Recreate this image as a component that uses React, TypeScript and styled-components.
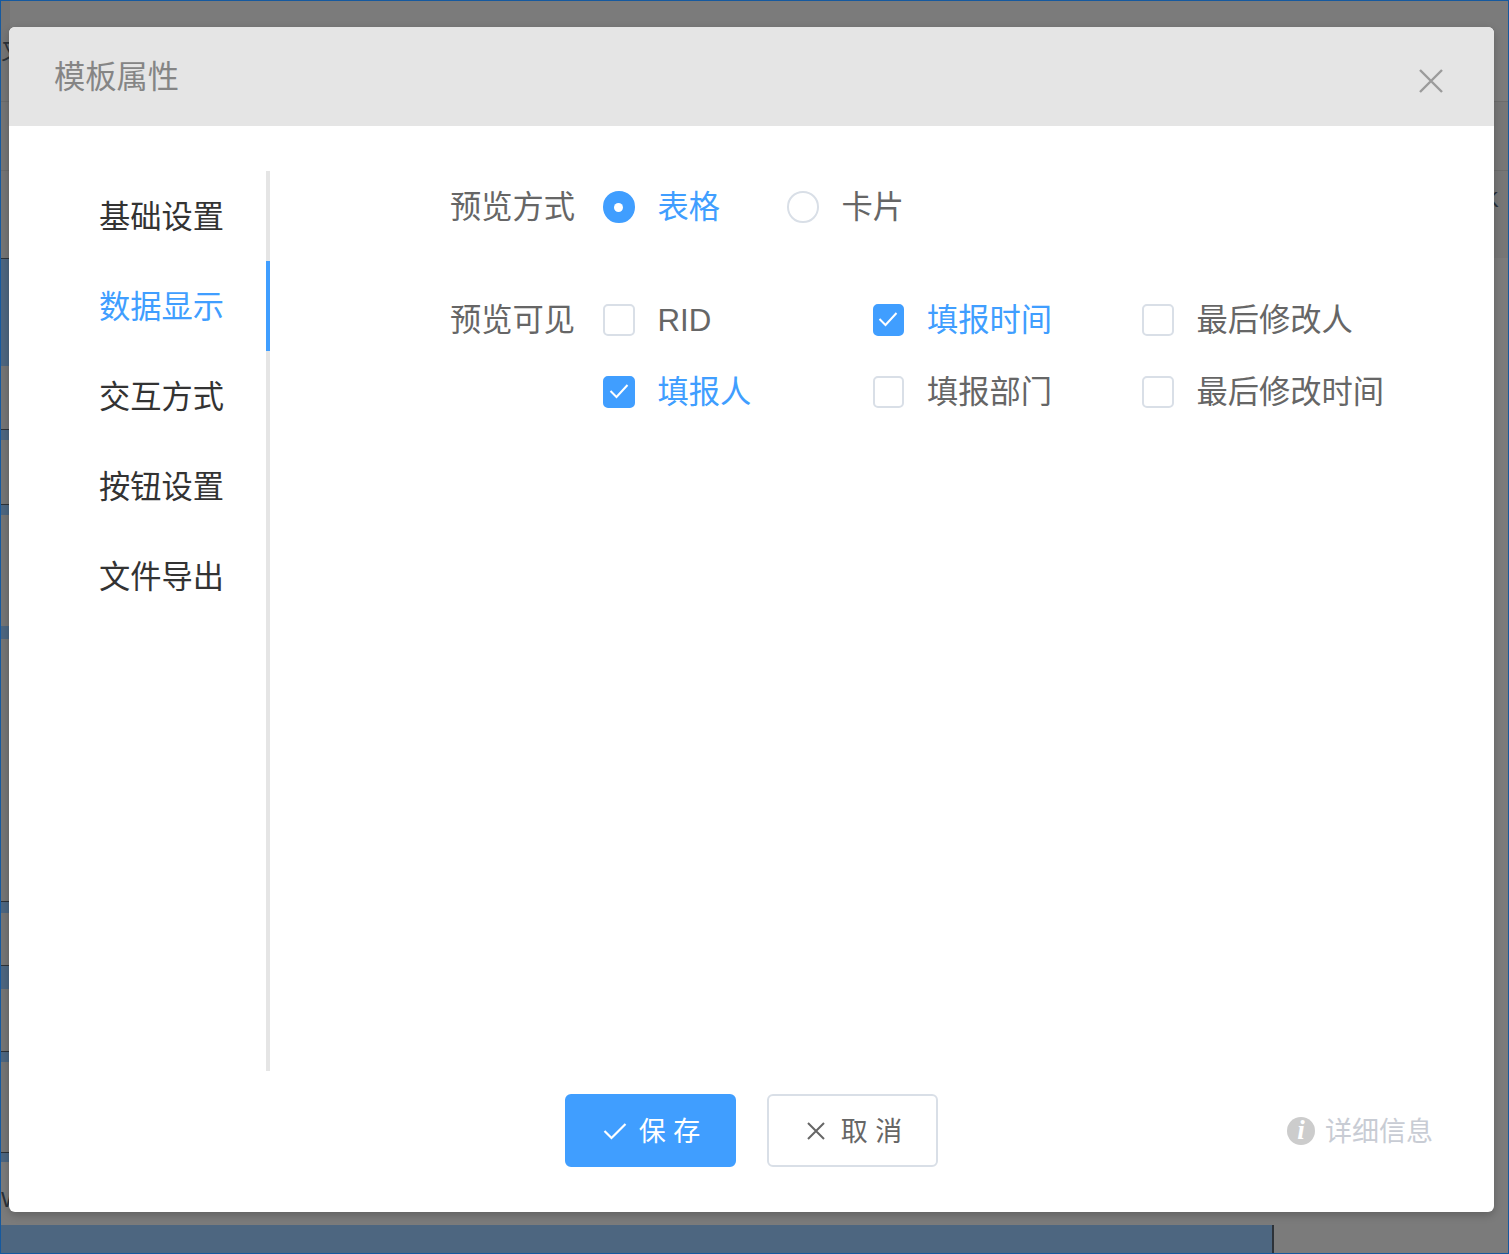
import React from 'react';
import styled, { createGlobalStyle } from 'styled-components';

const GlobalStyle = createGlobalStyle`
  html, body {
    margin: 0;
    padding: 0;
    background: #7b7b7b;
    font-family: 'Liberation Sans', 'Noto Sans CJK SC', sans-serif;
    line-height: 1.5;
  }
`;

// strips of the page behind the mask, only the gutters show them
const backdropRows = [
  { height: 100, tone: 'plain' },
  { height: 69, tone: 'lined' },
  { height: 88, tone: 'lined' },
  { height: 108, tone: 'blue' },
  { height: 63, tone: 'plain' },
  { height: 11, tone: 'blue' },
  { height: 64, tone: 'plain' },
  { height: 11, tone: 'blue' },
  { height: 111, tone: 'plain' },
  { height: 13, tone: 'blueFlat' },
  { height: 262, tone: 'plain' },
  { height: 12, tone: 'blue' },
  { height: 52, tone: 'plain' },
  { height: 24, tone: 'blue' },
  { height: 62, tone: 'plain' },
  { height: 11, tone: 'blue' },
  { height: 90, tone: 'plain' },
  { height: 10, tone: 'blue' },
];

const menu = ['基础设置', '数据显示', '交互方式', '按钮设置', '文件导出'];

const columns = [
  { label: 'RID', checked: false },
  { label: '填报时间', checked: true },
  { label: '最后修改人', checked: false },
  { label: '填报人', checked: true },
  { label: '填报部门', checked: false },
  { label: '最后修改时间', checked: false },
];

function CheckMark() {
  return (
    <svg width="20" height="16" viewBox="0 0 20 16" fill="none">
      <polyline points="1.5,7 7.5,13 18.5,1" stroke="#fff" strokeWidth="2" />
    </svg>
  );
}

function App() {
  return (
    <>
      <GlobalStyle />
      <Frame>
        <Backdrop>
          <Rows>
            {backdropRows.map((row, i) => (
              <BackRow key={i} $height={row.height}>
                <Gutter $tone={row.tone} />
                <RightGutter $lined={row.tone === 'lined'} />
              </BackRow>
            ))}
          </Rows>
          <BottomBar>
            <BottomBlue />
          </BottomBar>
        </Backdrop>
        <ClippedGlyph $left={0} $top={38}>
          又
        </ClippedGlyph>
        <ClippedGlyph $left={0} $top={1186}>
          W
        </ClippedGlyph>
        <ClippedGlyph $left={1483} $top={186}>
          K
        </ClippedGlyph>

        <Modal>
          <Header>
            <Title>模板属性</Title>
            <CloseButton>
              <svg width="26" height="26" viewBox="0 0 26 26" fill="none">
                <path d="M2 2L24 24M24 2L2 24" stroke="#9b9b9b" strokeWidth="2.4" />
              </svg>
            </CloseButton>
          </Header>
          <Body>
            <Nav>
              {menu.map((item, i) => (
                <NavItem key={item} $active={i === 1}>
                  {item}
                </NavItem>
              ))}
            </Nav>
            <Form>
              <FormRow>
                <FieldLabel>预览方式</FieldLabel>
                <RadioGroup>
                  <Option>
                    <Radio $checked />
                    <OptionText $active>表格</OptionText>
                  </Option>
                  <Option>
                    <Radio />
                    <OptionText>卡片</OptionText>
                  </Option>
                </RadioGroup>
              </FormRow>
              <FormRow>
                <FieldLabel>预览可见</FieldLabel>
                <CheckGrid>
                  {columns.map((col) => (
                    <Option key={col.label}>
                      <CheckBox $checked={col.checked}>
                        {col.checked && <CheckMark />}
                      </CheckBox>
                      <OptionText $active={col.checked}>{col.label}</OptionText>
                    </Option>
                  ))}
                </CheckGrid>
              </FormRow>
            </Form>
          </Body>
          <Footer>
            <span />
            <Buttons>
              <Button $primary>
                <svg width="24" height="18" viewBox="0 0 24 18" fill="none">
                  <polyline points="1.5,9 8.5,16 22.5,2" stroke="#fff" strokeWidth="2.2" />
                </svg>
                <ButtonLabel>保 存</ButtonLabel>
              </Button>
              <Button>
                <svg width="18" height="18" viewBox="0 0 18 18" fill="none">
                  <path d="M1 1L17 17M17 1L1 17" stroke="#666" strokeWidth="2" />
                </svg>
                <ButtonLabel>取 消</ButtonLabel>
              </Button>
            </Buttons>
            <Details>
              <InfoDot>i</InfoDot>
              <DetailsLabel>详细信息</DetailsLabel>
            </Details>
          </Footer>
        </Modal>
      </Frame>
    </>
  );
}

const Frame = styled.div`
  position: relative;
  box-sizing: border-box;
  width: 1509px;
  height: 1254px;
  overflow: hidden;
  border: 1px solid #15599f;
  background: #7b7b7b;
`;

const Backdrop = styled.div`
  display: flex;
  flex-direction: column;
  height: 100%;
`;

const Rows = styled.div`
  flex: 1;
  display: flex;
  flex-direction: column;
`;

const BackRow = styled.div<{ $height: number }>`
  display: flex;
  justify-content: space-between;
  height: ${(p) => p.$height}px;
`;

const Gutter = styled.div<{ $tone: string }>`
  box-sizing: border-box;
  width: 9px;
  background: ${(p) =>
    p.$tone === 'blue' || p.$tone === 'blueFlat' ? '#4d6680' : '#757575'};
  border-top: ${(p) =>
    p.$tone === 'blue'
      ? '1px solid #2d3238'
      : p.$tone === 'lined'
        ? '1px solid #6c6c6c'
        : 'none'};
`;

const RightGutter = styled.div<{ $lined: boolean }>`
  box-sizing: border-box;
  width: 14px;
  background: ${(p) => (p.$lined ? '#767676' : 'transparent')};
  border-top: ${(p) => (p.$lined ? '1px solid #6c6c6c' : 'none')};
`;

const BottomBar = styled.div`
  display: flex;
  height: 28px;
`;

const BottomBlue = styled.div`
  box-sizing: border-box;
  width: 1273px;
  background: #4d6680;
  border-right: 2px solid #2d3238;
`;

const ClippedGlyph = styled.span<{ $left: number; $top: number }>`
  position: absolute;
  left: ${(p) => p.$left}px;
  top: ${(p) => p.$top}px;
  font-size: 22px;
  line-height: 26px;
  color: #2b3138;
`;

const Modal = styled.div`
  position: absolute;
  left: 8px;
  top: 26px;
  width: 1485px;
  height: 1185px;
  display: flex;
  flex-direction: column;
  background: #fff;
  border-radius: 6px;
  box-shadow: 0 3px 9px rgba(0, 0, 0, 0.22);
`;

const Header = styled.div`
  display: flex;
  align-items: center;
  justify-content: space-between;
  height: 99px;
  padding: 0 50px 0 45px;
  background: #e5e5e5;
  border-radius: 6px 6px 0 0;
`;

const Title = styled.div`
  padding-top: 4px;
  font-size: 31.25px;
  color: #858585;
`;

const CloseButton = styled.div`
  display: flex;
  margin-top: 9px;
`;

const Body = styled.div`
  flex: 1;
  display: flex;
  margin-top: 45px;
`;

const Nav = styled.div`
  box-sizing: border-box;
  width: 261px;
  height: 900px;
  border-right: 4px solid #e5e5e5;
`;

const NavItem = styled.div<{ $active?: boolean }>`
  box-sizing: border-box;
  height: 90px;
  margin-right: -4px;
  padding: 4px 42px 0 0;
  display: flex;
  align-items: center;
  justify-content: flex-end;
  font-size: 31.25px;
  color: ${(p) => (p.$active ? '#409eff' : '#333')};
  border-right: 4px solid ${(p) => (p.$active ? '#409eff' : 'transparent')};
`;

const Form = styled.div`
  margin-left: 180px;
  display: flex;
  flex-direction: column;
  gap: 41px;
`;

const FormRow = styled.div`
  display: flex;
`;

const FieldLabel = styled.div`
  box-sizing: border-box;
  width: 153px;
  height: 72px;
  padding-top: 3px;
  display: flex;
  align-items: center;
  font-size: 31.25px;
  color: #666;
`;

const RadioGroup = styled.div`
  display: flex;
  gap: 67px;
`;

const CheckGrid = styled.div`
  display: grid;
  grid-template-columns: repeat(3, 269.5px);
`;

const Option = styled.div`
  display: flex;
  align-items: center;
  gap: 23px;
  height: 72px;
`;

const OptionText = styled.span<{ $active?: boolean }>`
  padding-top: 3px;
  font-size: 31.25px;
  color: ${(p) => (p.$active ? '#409eff' : '#666')};
`;

const Radio = styled.span<{ $checked?: boolean }>`
  box-sizing: border-box;
  width: 31.5px;
  height: 31.5px;
  display: flex;
  align-items: center;
  justify-content: center;
  border-radius: 50%;
  border: 2px solid ${(p) => (p.$checked ? '#409eff' : '#d9dfe7')};
  background: ${(p) => (p.$checked ? '#409eff' : '#fff')};
  &::after {
    content: '';
    display: ${(p) => (p.$checked ? 'block' : 'none')};
    width: 9px;
    height: 9px;
    border-radius: 50%;
    background: #fff;
  }
`;

const CheckBox = styled.span<{ $checked?: boolean }>`
  box-sizing: border-box;
  width: 31.5px;
  height: 31.5px;
  display: flex;
  align-items: center;
  justify-content: center;
  border-radius: 5px;
  border: 2px solid ${(p) => (p.$checked ? '#409eff' : '#d9dfe7')};
  background: ${(p) => (p.$checked ? '#409eff' : '#fff')};
`;

const Footer = styled.div`
  display: grid;
  grid-template-columns: 1fr auto 1fr;
  align-items: center;
  height: 73px;
  margin-bottom: 45px;
  padding-right: 61px;
  padding-left: 61px;
`;

const Buttons = styled.div`
  display: flex;
  gap: 31px;
`;

const Button = styled.div<{ $primary?: boolean }>`
  box-sizing: border-box;
  width: 171px;
  height: 73px;
  padding-left: ${(p) => (p.$primary ? '2px' : '4px')};
  display: flex;
  align-items: center;
  justify-content: center;
  gap: ${(p) => (p.$primary ? '12px' : '16px')};
  border-radius: 6px;
  font-size: 27px;
  color: ${(p) => (p.$primary ? '#fff' : '#666')};
  background: ${(p) => (p.$primary ? '#409eff' : '#fff')};
  border: 2px solid ${(p) => (p.$primary ? '#409eff' : '#d9dfe7')};
`;

const ButtonLabel = styled.span`
  padding-top: 3px;
`;

const Details = styled.div`
  justify-self: end;
  display: flex;
  align-items: center;
  gap: 10px;
  font-size: 27px;
  color: #c8ccd4;
`;

const DetailsLabel = styled.span`
  padding-top: 3px;
`;

const InfoDot = styled.span`
  width: 28px;
  height: 28px;
  display: flex;
  align-items: center;
  justify-content: center;
  border-radius: 50%;
  background: #ccc;
  color: #fff;
  font-family: 'Liberation Serif', serif;
  font-style: italic;
  font-weight: bold;
  font-size: 27px;
`;

export default App;
